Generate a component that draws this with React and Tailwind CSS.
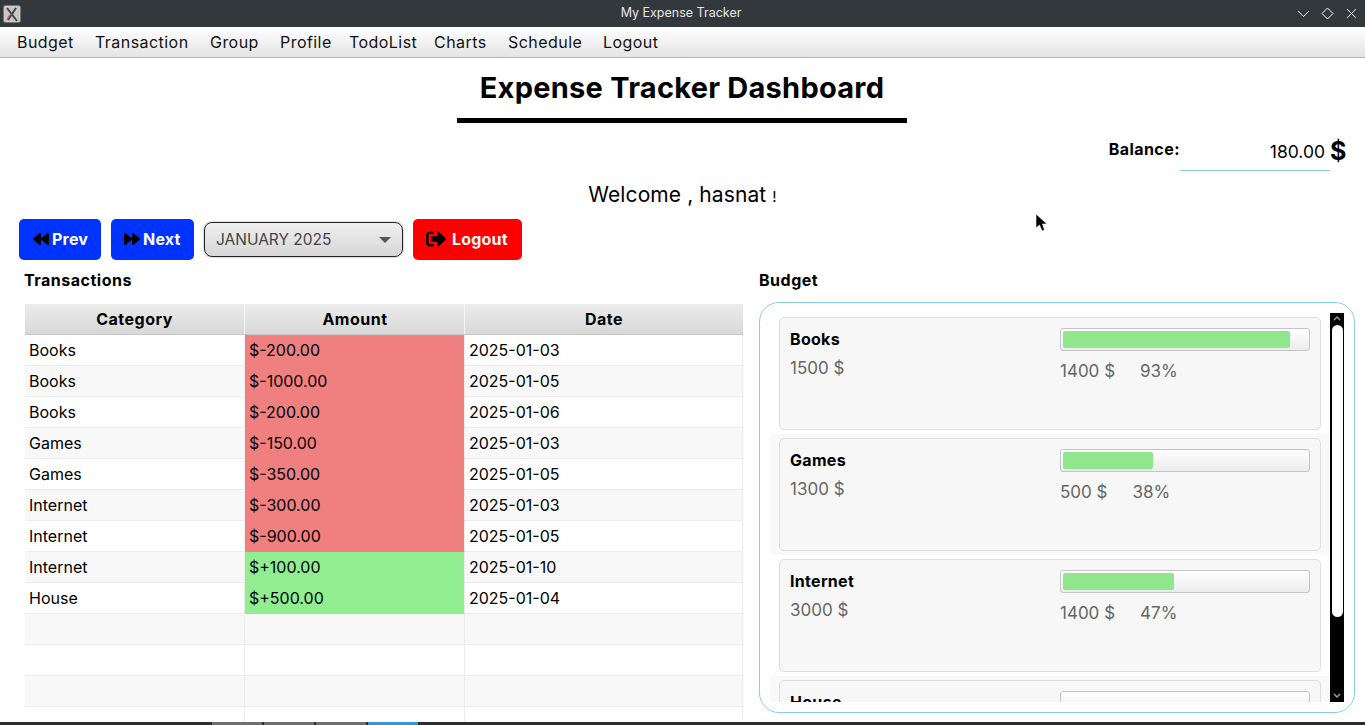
import React from 'react';
import { FaBackward, FaForward, FaSignOutAlt } from 'react-icons/fa';

const menus = [
    ['Budget', 'w-[78px]'],
    ['Transaction', 'w-[115px]'],
    ['Group', 'w-[70px]'],
    ['Profile', 'w-[69px]'],
    ['TodoList', 'w-[85px]'],
    ['Charts', 'w-[74px]'],
    ['Schedule', 'w-[95px]'],
    ['Logout', 'w-[70px]'],
];

const RED = 'bg-[#f08080]';
const GREEN = 'bg-[#90ee90]';

const rows = [
    ['Books', '$-200.00', '2025-01-03', RED],
    ['Books', '$-1000.00', '2025-01-05', RED],
    ['Books', '$-200.00', '2025-01-06', RED],
    ['Games', '$-150.00', '2025-01-03', RED],
    ['Games', '$-350.00', '2025-01-05', RED],
    ['Internet', '$-300.00', '2025-01-03', RED],
    ['Internet', '$-900.00', '2025-01-05', RED],
    ['Internet', '$+100.00', '2025-01-10', GREEN],
    ['House', '$+500.00', '2025-01-04', GREEN],
    ['', '', '', ''],
    ['', '', '', ''],
    ['', '', '', ''],
    ['', '', '', ''],
];

const budgets = [
    { name: 'Books', total: '1500 $', used: '1400 $', pct: '93%', fill: 'w-[227px]' },
    { name: 'Games', total: '1300 $', used: '500 $', pct: '38%', fill: 'w-[90px]' },
    { name: 'Internet', total: '3000 $', used: '1400 $', pct: '47%', fill: 'w-[111px]' },
    { name: 'House', total: '', used: '', pct: '', fill: 'w-0' },
];

const PageButton = ({ icon, label, className }) => (
    <button className={`flex h-[41px] items-center justify-start rounded-[5px] pb-[1px] text-[16px] font-bold tracking-[0.2px] text-white ${className}`}>
        {icon}
        {label}
    </button>
);

const BudgetCard = ({ item, striped }) => (
    <div className={`h-[121px] shrink-0 pt-[4px] pl-[9px] ${striped ? 'bg-[#f9f9f9]' : 'bg-white'}`}>
        <div className="flex h-[113px] w-[542px] rounded-[5px] border border-[#dedede] bg-[#f7f7f7] pt-[10px] pl-[10px]">
            <div className="w-[270px]">
                <div className="text-[16px] leading-[22px] font-bold tracking-[0.3px] text-black">{item.name}</div>
                <div className="mt-[6px] text-[17px] leading-[24px] text-[#666666]">{item.total}</div>
            </div>
            <div className="w-[250px]">
                <div className="h-[23px] rounded-[3px] border border-[#c4c4c4] bg-gradient-to-b from-white to-[#ececec] p-[2px]">
                    <div className={`h-[17px] rounded-[2px] bg-[#90e68c] ${item.fill}`} />
                </div>
                <div className="mt-[8px] flex gap-[25px] text-[17px] leading-[24px] text-[#666666]">
                    <span>{item.used}</span>
                    <span>{item.pct}</span>
                </div>
            </div>
        </div>
    </div>
);

const App = () => {
    return (
        <div className="flex h-[725px] w-[1365px] flex-col overflow-hidden bg-white font-['Inter','Liberation_Sans',sans-serif] text-black">
            {/* window title */}
            <div className="flex h-[27px] shrink-0 items-center bg-[#33383c] pr-[6px] pl-[3px]">
                <div className="flex-1">
                    <svg width="18" height="18" viewBox="0 0 18 18">
                        <rect x="0.5" y="0.5" width="17" height="17" rx="2" fill="#c8c8c8" stroke="#777" />
                        <path d="M4 3 L14 16 M13 3 L5 15" stroke="#444" strokeWidth="2" fill="none" />
                        <path d="M4 15 Q6 9 9 9" stroke="#d8693a" strokeWidth="1.2" fill="none" />
                    </svg>
                </div>
                <span className="text-[12.5px] text-[#e6e6e6]">My Expense Tracker</span>
                <div className="flex flex-1 items-center justify-end gap-[9px]">
                    <svg width="15" height="15" viewBox="0 0 15 15" fill="none" stroke="#fff" strokeWidth="1">
                        <path d="M2 5 L7.5 10.5 L13 5" />
                    </svg>
                    <svg width="15" height="15" viewBox="0 0 15 15" fill="none" stroke="#fff" strokeWidth="1">
                        <path d="M7.5 2 L13 7.5 L7.5 13 L2 7.5 Z" />
                    </svg>
                    <svg width="15" height="15" viewBox="0 0 15 15" fill="none" stroke="#fff" strokeWidth="1">
                        <path d="M3 3 L12 12 M12 3 L3 12" />
                    </svg>
                </div>
            </div>

            {/* menu bar */}
            <div className="flex h-[31px] shrink-0 items-center border-b border-[#b5b5b5] bg-gradient-to-b from-white to-[#e4e4e4] pl-[17px] text-[16px] tracking-[0.45px] text-[#111111]">
                {menus.map(([label, width]) => (
                    <span key={label} className={width}>{label}</span>
                ))}
            </div>

            {/* header */}
            <div className="flex flex-col items-center pt-[11px] pr-[1px]">
                <h1 className="text-[29px] leading-[38px] font-bold tracking-[0.25px]">Expense Tracker Dashboard</h1>
                <div className="mt-[11px] h-[5px] w-[450px] bg-black" />
            </div>

            {/* balance */}
            <div className="mt-[13px] flex h-[35px] items-start justify-end pr-[20px]">
                <span className="mt-[2px] text-[16px] leading-[22px] font-bold tracking-[0.45px]">Balance:</span>
                <div className="h-[35px] w-[150px] border-b border-[#87ceeb] pt-[4px] pr-[5px] text-right text-[17.5px] leading-[24px]">180.00</div>
                <span className="w-[15px] text-[25px] leading-[30px] font-bold">$</span>
            </div>

            <div className="mt-[9px] text-center text-[21px] leading-[30px] tracking-[0.1px]">
                Welcome , hasnat <span className="text-[15px]">!</span>
            </div>

            {/* toolbar */}
            <div className="mt-[7px] flex items-center gap-[10px] pl-[19px]">
                <PageButton className="w-[82px] gap-[3px] bg-[#0033ff] pl-[14px]" label="Prev" icon={<FaBackward className="text-[16px] text-black" />} />
                <PageButton className="w-[83px] gap-[3px] bg-[#0033ff] pl-[13px]" label="Next" icon={<FaForward className="text-[16px] text-black" />} />
                <div className="flex h-[35px] w-[199px] items-center justify-between rounded-[8px] border border-[#222222] bg-gradient-to-b from-[#f0f0f0] to-[#d6d6d6] pr-[11px] pl-[11px] text-[15.5px] text-[#444444] shadow-[0_0_2px_#888888]">
                    <span>JANUARY 2025</span>
                    <span className="h-0 w-0 border-x-[6px] border-t-[6px] border-x-transparent border-t-[#555555]" />
                </div>
                <PageButton className="w-[109px] gap-[6px] bg-[#ff0000] pl-[13px]" label="Logout" icon={<FaSignOutAlt className="text-[20px] text-black" />} />
            </div>

            {/* main */}
            <div className="mt-[9px] flex min-h-0 flex-1 pb-[3px]">
                <div className="w-[759px] shrink-0 pl-[24px]">
                    <div className="h-[22px] text-[16px] leading-[22px] font-bold tracking-[0.5px]">Transactions</div>
                    <div className="mt-[13px] ml-[1px] w-[718px] overflow-hidden text-[16px]">
                        <div className="flex h-[31px] border-b border-[#c8c8c8] bg-gradient-to-b from-[#ececec] to-[#d8d8d8] font-bold tracking-[0.5px]">
                            <div className="flex w-[220px] items-center justify-center border-r border-[#f4f4f4]">Category</div>
                            <div className="flex w-[220px] items-center justify-center border-r border-[#f4f4f4] pl-[1px]">Amount</div>
                            <div className="flex flex-1 items-center justify-center">Date</div>
                        </div>
                        {rows.map((r, i) => (
                            <div key={i} className={`flex h-[31px] ${i % 2 === 1 ? 'bg-[#f8f8f8]' : 'bg-white'}`}>
                                <div className="flex w-[220px] items-center border-r border-b border-[#ececec] pl-[4px]">{r[0]}</div>
                                {r[3] ? (
                                    <div className={`flex w-[220px] items-center border-r border-b border-r-[#ececec] border-b-transparent pl-[4px] ${r[3]}`}>{r[1]}</div>
                                ) : (
                                    <div className="w-[220px] border-r border-b border-[#ececec]" />
                                )}
                                <div className="flex flex-1 items-center border-r border-b border-[#ececec] pl-[4px]">{r[2]}</div>
                            </div>
                        ))}
                    </div>
                </div>

                <div className="flex min-w-0 flex-1 flex-col">
                    <div className="h-[22px] text-[16px] leading-[22px] font-bold tracking-[0.5px]">Budget</div>
                    <div className="mt-[11px] flex h-[411px] w-[596px] rounded-[20px] border border-[#87ceeb] pt-[10px] pl-[10px]">
                        <div className="flex h-[389px] w-[560px] flex-col overflow-hidden">
                            {budgets.map((b, i) => (
                                <BudgetCard key={b.name} item={b} striped={i % 2 === 1} />
                            ))}
                        </div>
                        <div className="flex h-[389px] w-[14px] flex-col items-center bg-black">
                            <svg width="10" height="10" viewBox="0 0 10 10" fill="none" stroke="#999" strokeWidth="1.5" className="shrink-0">
                                <path d="M2 7 L5 4 L8 7" />
                            </svg>
                            <div className="mt-[2px] h-[292px] w-[11px] rounded-[6px] bg-white" />
                            <svg width="10" height="10" viewBox="0 0 10 10" fill="none" stroke="#999" strokeWidth="1.5" className="mt-auto mb-[1px] shrink-0">
                                <path d="M2 3 L5 6 L8 3" />
                            </svg>
                        </div>
                    </div>
                </div>
            </div>

            {/* desktop taskbar strip */}
            <div className="flex h-[3px] shrink-0 bg-[#2a2e32] pl-[212px]">
                <div className="flex gap-[2px]">
                    <div className="h-[3px] w-[50px] bg-[#6b7074]" />
                    <div className="h-[3px] w-[50px] bg-[#6b7074]" />
                    <div className="h-[3px] w-[50px] bg-[#6b7074]" />
                    <div className="h-[3px] w-[50px] bg-[#3498db]" />
                </div>
            </div>

            {/* mouse pointer */}
            <svg width="14" height="20" viewBox="0 0 14 20" className="absolute top-[213px] left-[1035px]">
                <path d="M1 1 L1 15 L4.5 12 L7 18 L9.5 17 L7.5 11 L12 11 Z" fill="#000" stroke="#fff" strokeWidth="0.6" />
            </svg>
        </div>
    );
};

export default App;
